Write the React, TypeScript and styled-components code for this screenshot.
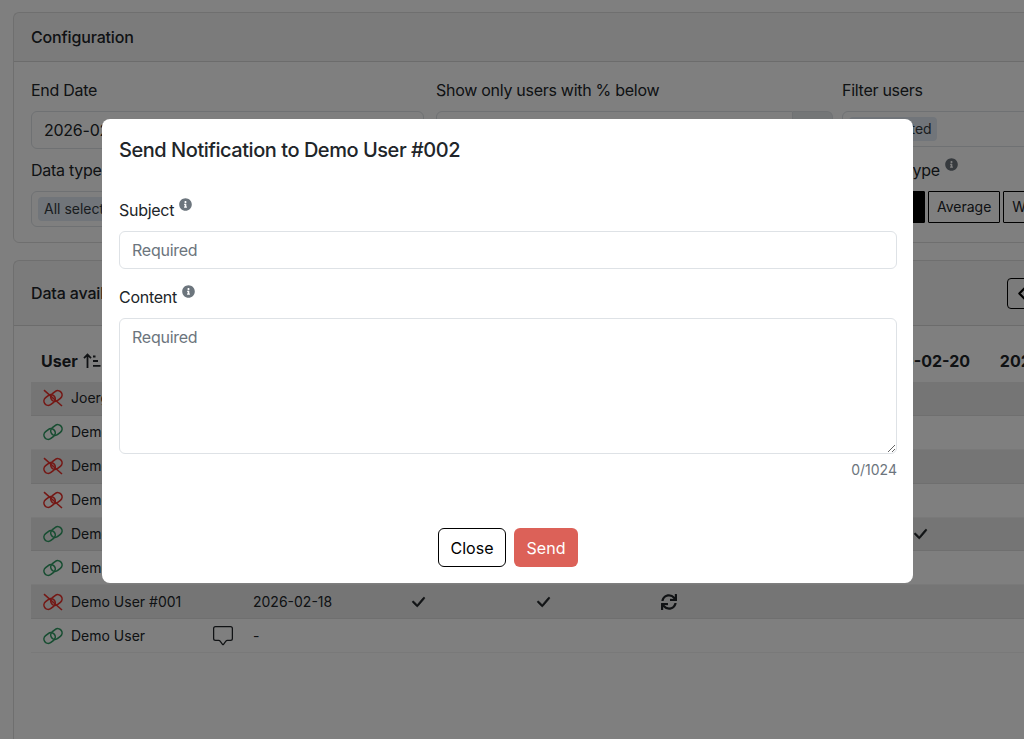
import React from 'react';
import styled, { createGlobalStyle } from 'styled-components';
import { BsChatSquare, BsCheckLg, BsChevronLeft } from 'react-icons/bs';
import { FaInfoCircle, FaSync } from 'react-icons/fa';

const GlobalStyle = createGlobalStyle`
  html, body {
    margin: 0;
    height: 100%;
    overflow: hidden;
    background: #fff;
    color: #212529;
    font-family: Inter, "Liberation Sans", sans-serif;
    font-size: 16px;
    line-height: 24px;
  }
  * { box-sizing: border-box; }
`;

const Page = styled.div`
  width: 1300px;
  padding: 12px 0 0 13px;
  display: flex;
  flex-direction: column;
  gap: 17px;
`;

const Card = styled.section`
  border: 1px solid rgba(0, 0, 0, 0.125);
  border-radius: 6px;
`;

const CardHeader = styled.div<{ $tall?: boolean }>`
  display: flex;
  align-items: center;
  justify-content: space-between;
  height: ${(p) => (p.$tall ? '65px' : '49px')};
  padding: 0 17px;
  background: rgba(0, 0, 0, 0.03);
  border-bottom: 1px solid rgba(0, 0, 0, 0.125);
  font-weight: 500;
  letter-spacing: -0.15px;
`;

const ConfigBody = styled.div`
  display: grid;
  grid-template-columns: 393px 397px 400px;
  column-gap: 12px;
  row-gap: 9px;
  padding: 16px 17px 15px;
  & > :nth-child(3) { margin-left: -3px; }
  & > :nth-child(5) { margin-left: -3px; }
`;

const Field = styled.div<{ $span?: number }>`
  grid-column: span ${(p) => p.$span ?? 1};
  display: flex;
  flex-direction: column;
  min-width: 0;
`;

const Label = styled.label`
  display: block;
  height: 24px;
  margin-bottom: 9px;
  white-space: nowrap;
  letter-spacing: -0.28px;
`;

const InfoIcon = styled(FaInfoCircle)`
  width: 13px;
  height: 13px;
  margin-left: 5px;
  vertical-align: 5px;
  color: #6c757d;
`;

const Control = styled.input`
  display: block;
  width: 100%;
  height: 38px;
  padding: 6px 12px;
  border: 1px solid #dee2e6;
  border-radius: 6px;
  background: #fff;
  color: #212529;
  font: inherit;
  letter-spacing: -0.25px;
  outline: none;
  &::placeholder { color: #6c757d; opacity: 1; }
`;

const InputGroup = styled.div`
  display: flex;
`;

const GroupControl = styled(Control)`
  border-radius: 6px 0 0 6px;
`;

const Addon = styled.span`
  width: 40px;
  flex: none;
  border: 1px solid #dee2e6;
  border-left: 0;
  border-radius: 0 6px 6px 0;
  background: #e9ecef;
`;

const MultiSelect = styled.div`
  display: flex;
  align-items: center;
  height: 36px;
  padding: 0 6px;
  border: 1px solid #dee2e6;
  border-radius: 6px;
  background: #fff;
`;

const Chip = styled.span`
  padding: 0 5px 0 6px;
  border-radius: 4px;
  background: #e2ebf5;
  font-size: 14px;
  line-height: 24px;
  color: #343a40;
`;

const ToggleRow = styled.div`
  display: flex;
  gap: 3px;
`;

const Toggle = styled.button<{ $active?: boolean }>`
  height: 32px;
  padding: 0 8px;
  border: 1px solid #000;
  border-radius: 1px;
  background: ${(p) => (p.$active ? '#000' : '#fff')};
  color: ${(p) => (p.$active ? '#fff' : '#212529')};
  font: inherit;
  font-size: 14px;
`;

const WideToggle = styled(Toggle)`
  width: 83px;
`;

const PagerButton = styled.button`
  display: flex;
  align-items: center;
  justify-content: center;
  width: 30px;
  height: 31px;
  margin-right: 245px;
  padding: 0;
  border: 1px solid #000;
  border-radius: 4px;
  background: transparent;
  color: #000;
  font-size: 17px;
`;

const ChevronIcon = styled(BsChevronLeft)`
  stroke: currentColor;
  stroke-width: 1;
`;

const DataBody = styled.div`
  height: 440px;
  padding: 19px 17px 0;
`;

const Row = styled.div`
  display: grid;
  grid-template-columns: 214px 110px repeat(7, 125.5px);
  align-items: center;
`;

const HeadRow = styled(Row)`
  height: 32px;
  margin-bottom: 5px;
  font-weight: 700;
`;

const HeadCell = styled.div`
  margin-left: 3px;
  text-align: center;
  white-space: nowrap;
`;

const UserHead = styled.div`
  display: flex;
  align-items: center;
  gap: 5px;
  padding-left: 10px;
`;

const UserRow = styled(Row)<{ $striped: boolean }>`
  height: 33.9px;
  background: ${(p) => (p.$striped ? 'rgba(0, 0, 0, 0.08)' : 'transparent')};
  border-bottom: 1px solid rgba(0, 0, 0, 0.05);
  font-size: 14px;
`;

const UserCell = styled.div`
  display: flex;
  align-items: center;
  gap: 8px;
  padding-left: 12px;
`;

const UserName = styled.span`
  flex: 1;
`;

const DateCell = styled.div`
  padding-left: 8px;
`;

const StatusCell = styled.div`
  display: flex;
  justify-content: center;
  font-size: 18px;
  color: #212529;
`;

const CheckIcon = styled(BsCheckLg)`
  stroke: currentColor;
  stroke-width: 0.6;
`;

const SyncIcon = styled(FaSync)`
  width: 16px;
  height: 16px;
`;

const ChatIcon = styled(BsChatSquare)`
  width: 20px;
  height: 20px;
  margin-right: 12px;
`;

const Backdrop = styled.div`
  position: fixed;
  inset: 0;
  display: flex;
  justify-content: center;
  padding: 119px 9px 0 0;
  background: rgba(0, 0, 0, 0.5);
`;

const Modal = styled.div`
  width: 811px;
  height: 464px;
  display: flex;
  flex-direction: column;
  padding: 0 16px 16px 17px;
  border-radius: 8px;
  background: #fff;
`;

const ModalTitle = styled.h2`
  margin: 0;
  padding-top: 16px;
  height: 79px;
  font-size: 20px;
  line-height: 30px;
  font-weight: 500;
  letter-spacing: -0.46px;
`;

const ModalLabel = styled(Label)`
  margin-bottom: 9px;
`;

const ModalField = styled.div`
  margin-bottom: 16px;
`;

const TextArea = styled(Control).attrs({ as: 'textarea' })`
  height: 136px;
  resize: vertical;
`;

const Counter = styled.div`
  margin-top: 5px;
  text-align: right;
  font-size: 14px;
  line-height: 21px;
  color: #6c757d;
`;

const ModalFooter = styled.div`
  margin-top: auto;
  display: flex;
  justify-content: center;
  gap: 8px;
`;

const CloseButton = styled.button`
  height: 39px;
  width: 68px;
  border: 1px solid #000;
  border-radius: 6px;
  background: #fff;
  color: #000;
  font: inherit;
`;

const SendButton = styled.button`
  height: 39px;
  width: 64px;
  border: none;
  border-radius: 6px;
  background: #dc6158;
  color: #fff;
  font: inherit;
`;

const SortIcon = () => (
  <svg width="18" height="16" viewBox="0 0 18 16" fill="none" stroke="#212529" strokeWidth="1.8">
    <path d="M4.5 15V2M1 5.2 4.5 1.6 8 5.2" />
    <path d="M10 3.5h2.5M10 8h5M10 12.8h7.5" />
  </svg>
);

const LinkIcon = ({ linked }: { linked: boolean }) => (
  <svg width="20" height="18" viewBox="0 0 20 18" fill="none" stroke={linked ? '#2f9a63' : '#e8302a'} strokeWidth="1.6">
    <rect x="0.6" y="6.7" width="12" height="8.6" rx="4.3" transform="rotate(-38 6.6 11)" />
    <rect x="7.4" y="2.7" width="12" height="8.6" rx="4.3" transform="rotate(-38 13.4 7)" />
    {!linked && <path d="M1 1.2 19 17" />}
  </svg>
);

const users = [
  { name: 'Joerg', linked: false },
  { name: 'Demo User #005', linked: true },
  { name: 'Demo User #004', linked: false },
  { name: 'Demo User #003', linked: false },
  { name: 'Demo User #002', linked: true, cells: { 4: 'check' } },
  { name: 'Demo User #006', linked: true },
  { name: 'Demo User #001', linked: false, date: '2026-02-18', cells: { 0: 'check', 1: 'check', 2: 'sync' } },
  { name: 'Demo User', linked: true, date: '-', chat: true },
] as { name: string; linked: boolean; date?: string; chat?: boolean; cells?: Record<number, string> }[];

const App = () => {
  return (
    <>
      <GlobalStyle />
      <Page>
        <Card>
          <CardHeader>Configuration</CardHeader>
          <ConfigBody>
            <Field>
              <Label>End Date</Label>
              <Control defaultValue="2026-02-20" />
            </Field>
            <Field>
              <Label>Show only users with % below</Label>
              <InputGroup>
                <GroupControl />
                <Addon />
              </InputGroup>
            </Field>
            <Field>
              <Label>Filter users</Label>
              <MultiSelect>
                <Chip>All selected</Chip>
              </MultiSelect>
            </Field>
            <Field $span={2}>
              <Label>Data type</Label>
              <MultiSelect>
                <Chip>All selected</Chip>
              </MultiSelect>
            </Field>
            <Field>
              <Label>
                Analysis type
                <InfoIcon />
              </Label>
              <ToggleRow>
                <WideToggle $active>Total</WideToggle>
                <Toggle>Average</Toggle>
                <Toggle>Weighted</Toggle>
              </ToggleRow>
            </Field>
          </ConfigBody>
        </Card>
        <Card>
          <CardHeader $tall>
            Data available
            <PagerButton>
              <ChevronIcon />
            </PagerButton>
          </CardHeader>
          <DataBody>
            <HeadRow>
              <UserHead>
                User
                <SortIcon />
              </UserHead>
              <div />
              <div />
              <div />
              <div />
              <div />
              <HeadCell>2026-02-20</HeadCell>
              <HeadCell>2026-02-21</HeadCell>
            </HeadRow>
            {users.map((user, i) => (
              <UserRow key={user.name} $striped={i % 2 === 0}>
                <UserCell>
                  <LinkIcon linked={user.linked} />
                  <UserName>{user.name}</UserName>
                  {user.chat && <ChatIcon />}
                </UserCell>
                <DateCell>{user.date}</DateCell>
                {[0, 1, 2, 3, 4].map((c) => (
                  <StatusCell key={c}>
                    {user.cells?.[c] === 'check' && <CheckIcon />}
                    {user.cells?.[c] === 'sync' && <SyncIcon />}
                  </StatusCell>
                ))}
              </UserRow>
            ))}
          </DataBody>
        </Card>
      </Page>
      <Backdrop>
        <Modal>
          <ModalTitle>Send Notification to Demo User #002</ModalTitle>
          <ModalField>
            <ModalLabel>
              Subject
              <InfoIcon />
            </ModalLabel>
            <Control placeholder="Required" />
          </ModalField>
          <div>
            <ModalLabel>
              Content
              <InfoIcon />
            </ModalLabel>
            <TextArea placeholder="Required" />
            <Counter>0/1024</Counter>
          </div>
          <ModalFooter>
            <CloseButton>Close</CloseButton>
            <SendButton>Send</SendButton>
          </ModalFooter>
        </Modal>
      </Backdrop>
    </>
  );
};

export default App;
